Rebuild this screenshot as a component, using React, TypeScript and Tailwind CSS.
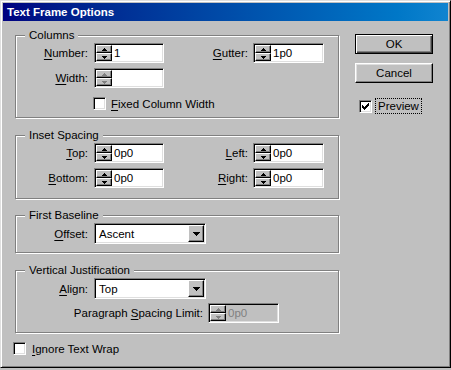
import type { ReactNode } from "react";

const sunken =
  "border border-t-[#808080] border-l-[#808080] border-b-white border-r-white shadow-[inset_1px_1px_0_#000,inset_-1px_-1px_0_#dfdfdf] p-[1px]";
const raised =
  "border border-t-white border-l-white border-r-black border-b-black shadow-[inset_-1px_-1px_0_#808080]";

function UpArrow({ color }: { color: string }) {
  return (
    <svg width="5" height="3" viewBox="0 0 5 3" shapeRendering="crispEdges">
      <path d="M2 0h1v1h1v1h1v1H0V2h1V1h1z" fill={color} />
    </svg>
  );
}

function DownArrow({ color, wide }: { color: string; wide?: boolean }) {
  if (wide) {
    return (
      <svg width="7" height="4" viewBox="0 0 7 4" shapeRendering="crispEdges">
        <path d="M0 0h7v1H6v1H5v1H4v1H3V3H2V2H1V1H0z" fill={color} />
      </svg>
    );
  }
  return (
    <svg width="5" height="3" viewBox="0 0 5 3" shapeRendering="crispEdges">
      <path d="M0 0h5v1H4v1H3v1H2V2H1V1H0z" fill={color} />
    </svg>
  );
}

function Key({ children }: { children: ReactNode }) {
  return <span className="underline underline-offset-[2px]">{children}</span>;
}

function SpinField({
  value,
  className,
  disabled,
  grayText,
}: {
  value: string;
  className: string;
  disabled?: boolean;
  grayText?: boolean;
}) {
  const arrow = disabled ? "#808080" : "#000";
  return (
    <div className={`flex h-[20px] ${sunken} ${className}`}>
      <div className="flex w-[16px] flex-col">
        <div className={`flex flex-1 items-center justify-center bg-[#c0c0c0] ${raised}`}>
          <UpArrow color={arrow} />
        </div>
        <div className={`flex flex-1 items-center justify-center bg-[#c0c0c0] ${raised}`}>
          <DownArrow color={arrow} />
        </div>
      </div>
      <div
        className={`flex flex-1 items-center pl-[2px] ${
          grayText ? "bg-[#c0c0c0] text-[#808080]" : "bg-white"
        }`}
      >
        {value}
      </div>
    </div>
  );
}

function Select({ value }: { value: string }) {
  return (
    <div className={`flex h-[21px] w-[112px] bg-white ${sunken}`}>
      <div className="flex flex-1 items-center pl-[3px]">{value}</div>
      <div className={`flex w-[16px] items-center justify-center bg-[#c0c0c0] ${raised}`}>
        <DownArrow color="#000" wide />
      </div>
    </div>
  );
}

function Checkbox({ checked }: { checked?: boolean }) {
  return (
    <div className={`flex h-[13px] w-[13px] shrink-0 items-center justify-center bg-white ${sunken}`}>
      {checked && (
        <svg width="7" height="7" viewBox="0 0 7 7" shapeRendering="crispEdges">
          <g fill="#000">
            <rect x="6" y="0" width="1" height="1" />
            <rect x="5" y="1" width="2" height="1" />
            <rect x="0" y="2" width="1" height="1" />
            <rect x="4" y="2" width="3" height="1" />
            <rect x="0" y="3" width="2" height="1" />
            <rect x="3" y="3" width="3" height="1" />
            <rect x="0" y="4" width="5" height="1" />
            <rect x="1" y="5" width="3" height="1" />
            <rect x="2" y="6" width="1" height="1" />
          </g>
        </svg>
      )}
    </div>
  );
}

function Group({
  title,
  className,
  children,
}: {
  title: string;
  className: string;
  children: ReactNode;
}) {
  return (
    <div
      className={`relative flex flex-col border border-[#808080] shadow-[1px_1px_0_#fff,inset_1px_1px_0_#fff] pt-[7px] ${className}`}
    >
      <span className="absolute -top-[8px] left-[9px] bg-[#c0c0c0] px-[4px] leading-[14px]">
        {title}
      </span>
      {children}
    </div>
  );
}

function FieldRow({
  left,
  leftField,
  right,
  rightField,
}: {
  left: ReactNode;
  leftField: ReactNode;
  right?: ReactNode;
  rightField?: ReactNode;
}) {
  return (
    <div className="flex h-[20px] items-center">
      <div className="w-[72px] text-right">{left}</div>
      <div className="ml-[6px]">{leftField}</div>
      {right && <div className="w-[84px] text-right">{right}</div>}
      {rightField && <div className="ml-[5px]">{rightField}</div>}
    </div>
  );
}

export default function App() {
  return (
    <div className="h-[370px] w-[451px] bg-[#c0c0c0] font-['Liberation_Sans',Arial,sans-serif] text-[11.5px] leading-[14px] text-black">
      <div className="flex h-[368px] flex-col border border-t-[#dfdfdf] border-l-[#dfdfdf] border-r-black border-b-black p-[2px] shadow-[inset_1px_1px_0_#fff,inset_-1px_-1px_0_#808080]">
        {/* Title bar */}
        <div className="flex h-[18px] shrink-0 items-center bg-linear-to-r from-[#000080] to-[#1084d0] pl-[4px] font-bold text-white">
          Text Frame Options
        </div>

        <div className="flex flex-1 pl-[12px]">
          {/* Left column */}
          <div className="flex w-[324px] flex-col pt-[14px]">
            <Group title="Columns" className="pb-[7px]">
              <FieldRow
                left={<><Key>N</Key>umber:</>}
                leftField={<SpinField value="1" className="w-[70px]" />}
                right={<><Key>G</Key>utter:</>}
                rightField={<SpinField value="1p0" className="w-[71px]" />}
              />
              <div className="mt-[5px]">
                <FieldRow
                  left={<><Key>W</Key>idth:</>}
                  leftField={<SpinField value="" className="w-[70px]" disabled />}
                />
              </div>
              <div className="ml-[77px] mt-[9px] flex h-[13px] items-center">
                <Checkbox />
                <span className="ml-[5px]">
                  <Key>F</Key>ixed Column Width
                </span>
              </div>
            </Group>

            <Group title="Inset Spacing" className="mt-[17px] pb-[10px]">
              <FieldRow
                left={<><Key>T</Key>op:</>}
                leftField={<SpinField value="0p0" className="w-[70px]" />}
                right={<><Key>L</Key>eft:</>}
                rightField={<SpinField value="0p0" className="w-[71px]" />}
              />
              <div className="mt-[5px]">
                <FieldRow
                  left={<><Key>B</Key>ottom:</>}
                  leftField={<SpinField value="0p0" className="w-[70px]" />}
                  right={<><Key>R</Key>ight:</>}
                  rightField={<SpinField value="0p0" className="w-[71px]" />}
                />
              </div>
            </Group>

            <Group title="First Baseline" className="mt-[16px] pb-[8px]">
              <div className="flex h-[21px] items-center">
                <div className="w-[72px] text-right">
                  <Key>O</Key>ffset:
                </div>
                <div className="ml-[6px]">
                  <Select value="Ascent" />
                </div>
              </div>
            </Group>

            <Group title="Vertical Justification" className="mt-[17px] pb-[9px]">
              <div className="flex h-[21px] items-center">
                <div className="w-[72px] text-right">
                  <Key>A</Key>lign:
                </div>
                <div className="ml-[6px]">
                  <Select value="Top" />
                </div>
              </div>
              <div className="mt-[4px] flex h-[20px] items-center">
                <div className="w-[187px] text-right">
                  Paragraph <Key>S</Key>pacing Limit:
                </div>
                <div className="ml-[5px]">
                  <SpinField value="0p0" className="w-[71px]" disabled grayText />
                </div>
              </div>
            </Group>

            <div className="-ml-[2px] mt-[9px] flex h-[13px] items-center">
              <Checkbox />
              <span className="ml-[6px]">
                <Key>I</Key>gnore Text Wrap
              </span>
            </div>
          </div>

          {/* Right column */}
          <div className="ml-[16px] flex w-[78px] flex-col pt-[13px]">
            <button className="flex h-[20px] w-[78px] items-center justify-center border border-black bg-[#c0c0c0] shadow-[inset_1px_1px_0_#fff,inset_-1px_-1px_0_#404040,inset_-2px_-2px_0_#808080]">
              OK
            </button>
            <button className="mt-[9px] flex h-[20px] w-[78px] items-center justify-center border border-t-white border-l-white border-r-black border-b-black bg-[#c0c0c0] shadow-[inset_-1px_-1px_0_#808080,inset_1px_1px_0_#dfdfdf]">
              Cancel
            </button>
            <div className="mt-[15px] flex h-[16px] items-center">
              <div className="ml-[4px]">
                <Checkbox checked />
              </div>
              <span className="ml-[3px] flex h-[16px] items-center border border-dotted border-black px-[2px]">
                Preview
              </span>
            </div>
          </div>
        </div>
      </div>
    </div>
  );
}
